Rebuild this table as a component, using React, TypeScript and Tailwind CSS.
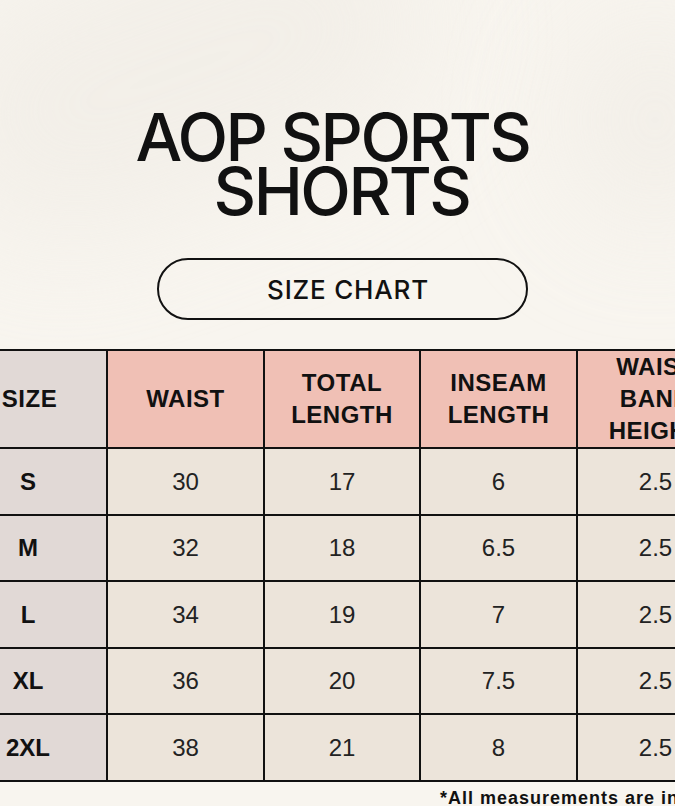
const headers = [
  ['SIZE'],
  ['WAIST'],
  ['TOTAL', 'LENGTH'],
  ['INSEAM', 'LENGTH'],
  ['WAIST', 'BAND', 'HEIGHT'],
];

const rows = [
  { size: 'S', waist: '30', total: '17', inseam: '6', band: '2.5', h: 'h-[67px]' },
  { size: 'M', waist: '32', total: '18', inseam: '6.5', band: '2.5', h: 'h-[66px]' },
  { size: 'L', waist: '34', total: '19', inseam: '7', band: '2.5', h: 'h-[67px]' },
  { size: 'XL', waist: '36', total: '20', inseam: '7.5', band: '2.5', h: 'h-[66px]' },
  { size: '2XL', waist: '38', total: '21', inseam: '8', band: '2.5', h: 'h-[67px]' },
];

const widths = ['w-[158px]', 'w-[157px]', 'w-[156px]', 'w-[157px]', 'w-[157px]'];

export default function App() {
  return (
    <div className="relative h-[806px] w-[675px] overflow-hidden bg-[#f8f5ef] font-['Liberation_Sans',Arial,sans-serif] text-[#111]">
      <div className="pointer-events-none absolute -left-[80px] top-[-60px] h-[260px] w-[520px] rotate-[-20deg] rounded-full bg-[#efebe4] opacity-60 blur-3xl" />
      <div className="pointer-events-none absolute -right-[60px] top-[20px] h-[200px] w-[160px] rounded-full bg-[#eeeae3] opacity-70 blur-3xl" />

      <div className="relative flex flex-col items-center pt-[110px]">
        <h1 className="flex flex-col items-center font-['Inter',sans-serif] text-[66px] font-medium tracking-[-2.5px]">
          <span className="mr-[10px] block h-[54px] leading-[54px]">AOP SPORTS</span>
          <span className="ml-[8px] block h-[54px] leading-[54px]">SHORTS</span>
        </h1>

        <div className="ml-[9px] mt-[40px] flex h-[62px] w-[371px] items-center justify-center rounded-full border-2 border-[#111]">
          <span className="pl-[12px] font-['Inter',sans-serif] text-[26px] font-medium tracking-[0.8px]">
            SIZE CHART
          </span>
        </div>
      </div>

      <div className="relative ml-[-52px] mt-[29px] w-max border-l-2 border-t-2 border-[#111]">
        <div className="flex">
          {headers.map((lines, i) => (
            <div
              key={i}
              className={`${widths[i]} flex h-[98px] flex-col items-center justify-center border-b-2 border-r-2 border-[#111] text-[24px] font-bold leading-[32px] tracking-[0.5px] ${
                i === 0 ? 'bg-[#e1d9d6] pl-[3px]' : 'bg-[#f0c0b5]'
              }`}
            >
              {lines.map((l) => (
                <span key={l}>{l}</span>
              ))}
            </div>
          ))}
        </div>
        {rows.map((r) => (
          <div key={r.size} className="flex">
            <div
              className={`${widths[0]} ${r.h} flex items-center justify-center border-b-2 border-r-2 border-[#111] bg-[#e1d9d6] text-[24px] font-bold`}
            >
              {r.size}
            </div>
            {[r.waist, r.total, r.inseam, r.band].map((v, j) => (
              <div
                key={j}
                className={`${widths[j + 1]} ${r.h} flex items-center justify-center border-b-2 border-r-2 border-[#111] bg-[#ece4da] text-[24px] text-[#222]`}
              >
                {v}
              </div>
            ))}
          </div>
        ))}
      </div>

      <p className="relative ml-[440px] mt-[6px] whitespace-nowrap text-[18px] font-bold leading-[20px] tracking-[1px]">
        *All measurements are in inches
      </p>
    </div>
  );
}
